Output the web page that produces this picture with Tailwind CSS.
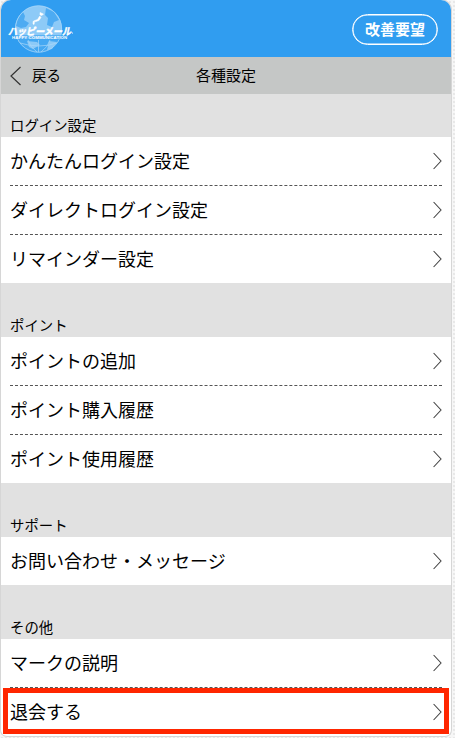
<!DOCTYPE html>
<html lang="ja">
<head>
    <meta charset="UTF-8">
    <meta name="viewport" content="width=device-width, initial-scale=1.0">
    <script src="https://cdn.jsdelivr.net/npm/@tailwindcss/browser@4"></script>
    <title>各種設定</title>
</head>
<body class="h-[738px] overflow-hidden bg-[#f7f7f7] bg-[radial-gradient(#e8e8e8_0.7px,transparent_0.8px)] bg-[size:4px_4px] font-['Noto_Sans_CJK_JP',sans-serif] text-black">
    <div class="ml-px w-[450px] h-[736px] rounded-t-[10px] rounded-b-md overflow-hidden bg-white shadow-[0_0_0_1px_#d6d6d6]">
        <header class="h-[57px] bg-[#309df0] flex items-center justify-between pl-1.5 pr-3">
            <!-- Logo -->
            <svg class="w-[76px] h-[54px] overflow-visible" viewBox="7 2 76 54">
                <circle cx="38.500" cy="29" r="23.5" fill="#8dcaf7"/>
                <path d="M16 26q1-8 7-14l2 4-1 4 5 3-3 4-5 1zM46 8l8 4 5 8-5 2-2 5-5-2 1-7-3-3z" fill="#4dabf2"/>
                <path d="M17.200 39h42.600a23.5 23.5 0 0 1-42.600 0z" fill="#45a8f2"/>
                <path d="M27 41l10 1 3 3-7 4-4-2zM49 41l8 1-5 7-5 1z" fill="#8dcaf7"/>
                <g fill="none" stroke="#a9d7f9" stroke-width=".7">
                    <circle cx="38.500" cy="29" r="23.2"/>
                    <path d="M38.500 40v12M28 40q2 7 9 12M50 40q-2 7-9 12M20 43q19 6 37 0"/>
                </g>
                <path d="M40 12.500l3.500 1.500-1.500 1.500-2-.5zM39.800 16l1.200 1.500-2 3-3 1-3 .5.500-1 4-1.500zM33 22l1.500.5-.5 2-1-.5z" fill="#fff" stroke="#fff" stroke-width=".5"/>
                <rect x="14" y="35" width="50" height="4.500" fill="#45a8f2" opacity=".7"/>
                <text transform="translate(8 34.500) skewX(-12) scale(1 .9)" textLength="63" lengthAdjust="spacingAndGlyphs" font-family="Noto Sans CJK JP, sans-serif" font-size="11" font-weight="700" fill="#fff" stroke="#fff" stroke-width=".5">ハッピーメール</text>
                <circle cx="72.500" cy="33" r=".6" fill="#fff"/>
                <text x="12" y="39" textLength="55" lengthAdjust="spacing" font-family="Liberation Sans, sans-serif" font-size="4.300" font-weight="700" fill="#fff">HAPPY COMMUNICATION</text>
            </svg>
            <a href="#" class="w-[86px] h-[31px] mt-0.5 mr-px rounded-full border-[1.5px] border-white text-white text-[15px] font-bold flex items-center justify-center shadow-[inset_0_0_0_0.5px_#fff]">改善要望</a>
        </header>
        <div class="h-[37px] bg-[#c5c7c6] grid grid-cols-3 items-center text-[14.5px]">
            <a href="#" class="flex items-center gap-2.5 pl-[9px]">
                <svg class="w-3 h-5" viewBox="0 0 12 20" fill="none" stroke="#333" stroke-width="1.200"><path d="M10.500 1L1 10l9.500 9"/></svg>
                <span class="pb-0.5">戻る</span>
            </a>
            <h1 class="text-center text-[15px] pb-px">各種設定</h1>
        </div>
        <main id="settings"></main>
    </div>
    <!-- 退会するの強調枠 -->
    <div class="absolute left-[3px] top-[688px] w-[446px] h-[46px] border-5 border-[#ff2600]"></div>
    <script>
        const sections = [
            ["ログイン設定", ["かんたんログイン設定", "ダイレクトログイン設定", "リマインダー設定"]],
            ["ポイント", ["ポイントの追加", "ポイント購入履歴", "ポイント使用履歴"]],
            ["サポート", ["お問い合わせ・メッセージ"]],
            ["その他", ["マークの説明", "退会する"]]
        ];

        document.getElementById('settings').innerHTML = sections.map(([titulo, itens], i) => `
            <section>
                <h2 class="${i === 0 ? 'h-[43px]' : 'h-[54px]'} bg-[#e1e1e1] flex items-end pl-[9px] pb-0.5 text-[14.4px] leading-5">${titulo}</h2>
                <ul class="px-[9px]">
                    ${itens.map(item => `
                        <li class="h-[49px] last:h-12 border-b border-dashed border-[#555] last:border-0 flex items-center justify-between text-lg">
                            <span class="pb-0.5">${item}</span>
                            <svg class="w-[9px] h-[18px]" viewBox="0 0 9 18" fill="none" stroke="#444" stroke-width="1.100"><path d="M.6 1l7.400 8-7.400 8"/></svg>
                        </li>`).join('')}
                </ul>
            </section>`).join('');
    </script>
</body>
</html>
